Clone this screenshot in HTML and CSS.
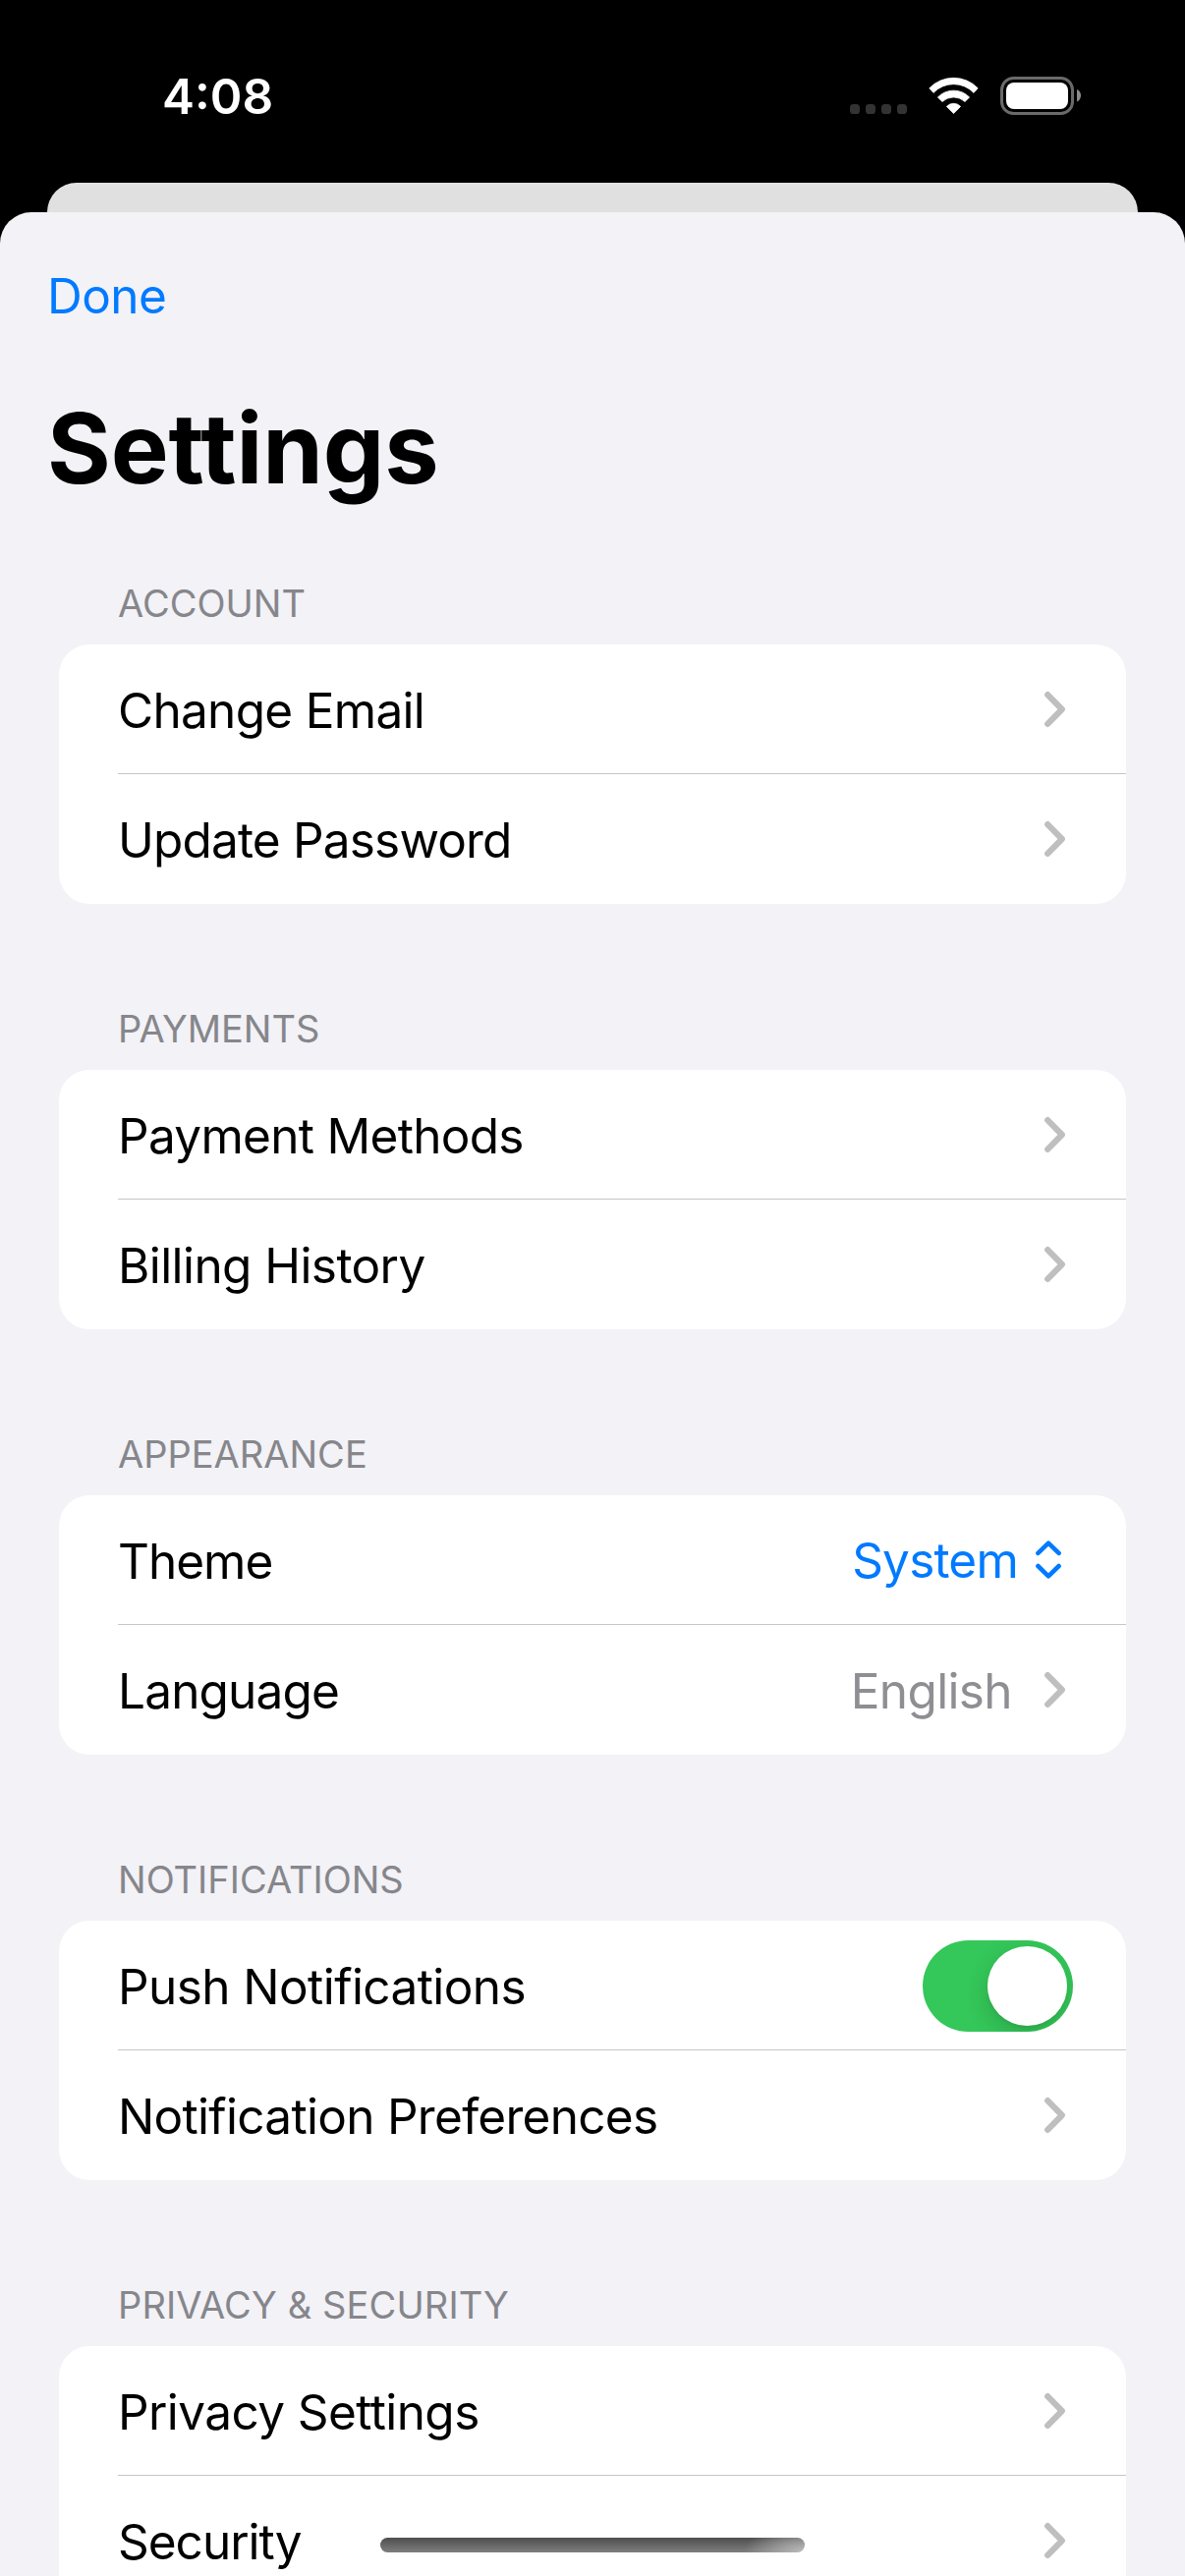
FILE: index.html
```
<!DOCTYPE html>
<html lang="en">
<head>
<meta charset="utf-8">
<title>Settings</title>
<link rel="stylesheet" href="styles.css">
</head>
<body>
<svg class="symbols" width="0" height="0" aria-hidden="true">
  <symbol id="chevron" viewBox="0 0 22 38">
    <path d="M3.2 4.1 17.8 19 3.2 33.9" fill="none" stroke="#bfbfbf" stroke-width="6.2" stroke-linecap="round" stroke-linejoin="round"/>
  </symbol>
</svg>

<header class="status">
  <time class="clock">4:08</time>
  <div class="status-icons">
    <svg width="58" height="39" viewBox="0 0 58 39" fill="#333">
      <rect x="0" y="28" width="10" height="10" rx="3.6"/>
      <rect x="16" y="28" width="10" height="10" rx="3.6"/>
      <rect x="32" y="28" width="10" height="10" rx="3.6"/>
      <rect x="48" y="28" width="10" height="10" rx="3.6"/>
    </svg>
    <svg width="51" height="39" viewBox="0 0 51 39" fill="#fff" stroke="#fff" stroke-width=".8" stroke-linejoin="round">
      <path d="M.8 11.8A34.3 34.3 0 0 1 50.2 11.8L46 16.4A28.4 28.4 0 0 0 5 16.4Z"/>
      <path d="M9.4 21A22.3 22.3 0 0 1 41.6 21L37 25.5A16.8 16.8 0 0 0 14 25.5Z"/>
      <path d="M18.4 30.4A9.8 9.8 0 0 1 32.6 30.4L25.5 37.6Z"/>
    </svg>
    <svg width="83" height="39" viewBox="0 0 83 39">
      <rect x="1.5" y="1.5" width="72" height="36" rx="12" fill="none" stroke="#6a6a6a" stroke-width="3"/>
      <rect x="6" y="6" width="63" height="27" rx="8" fill="#fff"/>
      <path d="M78 13a6.8 6.8 0 0 1 0 12.4Z" fill="#8c8c8c"/>
    </svg>
  </div>
</header>

<div class="backdrop-card"></div>

<main class="sheet">
  <nav class="navbar"><a class="done">Done</a></nav>
  <h1 class="title">Settings</h1>

  <section class="group">
    <h2 class="group-title">ACCOUNT</h2>
    <div class="card">
      <div class="row"><span class="label">Change Email</span><svg class="chevron"><use href="#chevron"/></svg></div>
      <div class="row"><span class="label label-snug">Update Password</span><svg class="chevron"><use href="#chevron"/></svg></div>
    </div>
  </section>

  <section class="group">
    <h2 class="group-title">PAYMENTS</h2>
    <div class="card">
      <div class="row"><span class="label">Payment Methods</span><svg class="chevron"><use href="#chevron"/></svg></div>
      <div class="row"><span class="label label-loose">Billing History</span><svg class="chevron"><use href="#chevron"/></svg></div>
    </div>
  </section>

  <section class="group">
    <h2 class="group-title">APPEARANCE</h2>
    <div class="card">
      <div class="row row-picker">
        <span class="label label-tight">Theme</span>
        <span class="picker">System</span>
        <svg class="updown" viewBox="0 0 26 40" fill="none" stroke="#007aff" stroke-width="4.6" stroke-linecap="round" stroke-linejoin="round">
          <path d="M2.4 12.9 13 2.7 23.6 12.9M2.4 26 13 36.3 23.6 26"/>
        </svg>
      </div>
      <div class="row">
        <span class="label label-snug">Language</span>
        <span class="value">English</span>
        <svg class="chevron"><use href="#chevron"/></svg>
      </div>
    </div>
  </section>

  <section class="group">
    <h2 class="group-title">NOTIFICATIONS</h2>
    <div class="card">
      <div class="row row-switch"><span class="label label-loose">Push Notifications</span><span class="switch"><span class="knob"></span></span></div>
      <div class="row"><span class="label">Notification Preferences</span><svg class="chevron"><use href="#chevron"/></svg></div>
    </div>
  </section>

  <section class="group">
    <h2 class="group-title group-title-loose">PRIVACY &amp; SECURITY</h2>
    <div class="card">
      <div class="row"><span class="label label-loose">Privacy Settings</span><svg class="chevron"><use href="#chevron"/></svg></div>
      <div class="row"><span class="label label-tight">Security</span><svg class="chevron"><use href="#chevron"/></svg></div>
    </div>
  </section>
</main>

<div class="home-indicator"></div>
</body>
</html>
```
FILE: styles.css
```
* {
  box-sizing: border-box;
}

html {
  background: #000;
}

body {
  position: relative;
  display: flex;
  flex-direction: column;
  width: 1206px;
  height: 2622px;
  margin: 0;
  overflow: hidden;
  background: #000;
  color: #000;
  font: 400 49.5px/60px Inter, "Liberation Sans", sans-serif;
}

.symbols {
  position: absolute;
}

/* Status bar */
.status {
  display: flex;
  flex: none;
  align-items: flex-start;
  justify-content: space-between;
  height: 186px;
  padding: 68px 105px 0 165px;
  color: #fff;
}

.clock {
  font-weight: 600;
}

.status-icons {
  display: flex;
  gap: 22px;
  height: 39px;
  margin-top: 10px;
}

/* Card peeking out behind the sheet */
.backdrop-card {
  flex: none;
  height: 30px;
  margin: 0 48px;
  border-radius: 30px 30px 0 0;
  background: linear-gradient(#e4e4e4, #e0e0e0 8px);
}

/* Sheet */
.sheet {
  flex: 1 0 auto;
  padding: 55px 60px 0;
  border-radius: 32px 32px 0 0;
  background: #f2f2f7;
}

.navbar,
.title {
  margin-left: -12px;
}

.navbar {
  display: flex;
}

.done {
  color: #007aff;
  letter-spacing: -0.55px;
}

.title {
  margin-top: 65px;
  margin-bottom: 75px;
  font-size: 99px;
  font-weight: 700;
  line-height: 120px;
  letter-spacing: -0.1px;
}

/* Grouped lists */
.group + .group {
  margin-top: 104px;
}

.group-title {
  margin: 0;
  padding: 0 60px 19px;
  color: #86868b;
  font-size: 38px;
  font-weight: 400;
  line-height: 46px;
}

.group-title-loose {
  letter-spacing: 0.12px;
}

.card {
  border-radius: 31px;
  background: #fff;
}

.row {
  display: flex;
  align-items: center;
  height: 132px;
  margin-left: 60px;
  padding-right: 61px;
}

.row:first-child {
  background: linear-gradient(#c6c6c8, #c6c6c8) left bottom / 100% 1px no-repeat;
}

.row-picker {
  padding-right: 66px;
}

.row-switch {
  padding-right: 54px;
}

.label {
  flex: 1;
  padding-top: 2px;
  letter-spacing: -0.7px;
}

.label-loose {
  letter-spacing: -0.58px;
}

.label-snug {
  letter-spacing: -0.82px;
}

.label-tight {
  letter-spacing: -1px;
}

.picker {
  margin-right: 18px;
  color: #007aff;
  letter-spacing: -0.8px;
}

.value {
  margin-right: 33px;
  padding-top: 2px;
  color: #8e8e93;
  letter-spacing: -0.63px;
}

.chevron {
  width: 22px;
  height: 38px;
}

.updown {
  width: 26px;
  height: 40px;
}

.switch {
  display: flex;
  justify-content: flex-end;
  width: 153px;
  height: 93px;
  margin-top: 1px;
  padding: 6px;
  overflow: hidden;
  border-radius: 47px;
  background: #34c759;
}

.knob {
  width: 81px;
  height: 81px;
  border-radius: 50%;
  background: #fff;
  box-shadow: 0 9px 24px rgba(0, 0, 0, 0.16), 0 3px 3px rgba(0, 0, 0, 0.04);
}

.home-indicator {
  position: absolute;
  bottom: 24px;
  left: 387px;
  width: 432px;
  height: 15px;
  border-radius: 8px;
  background:
    radial-gradient(ellipse 62px 30px at 100% 100%, rgba(195, 195, 195, 0.9), rgba(190, 190, 190, 0)),
    linear-gradient(#4e4e4e, #7e7e7e);
}
```
